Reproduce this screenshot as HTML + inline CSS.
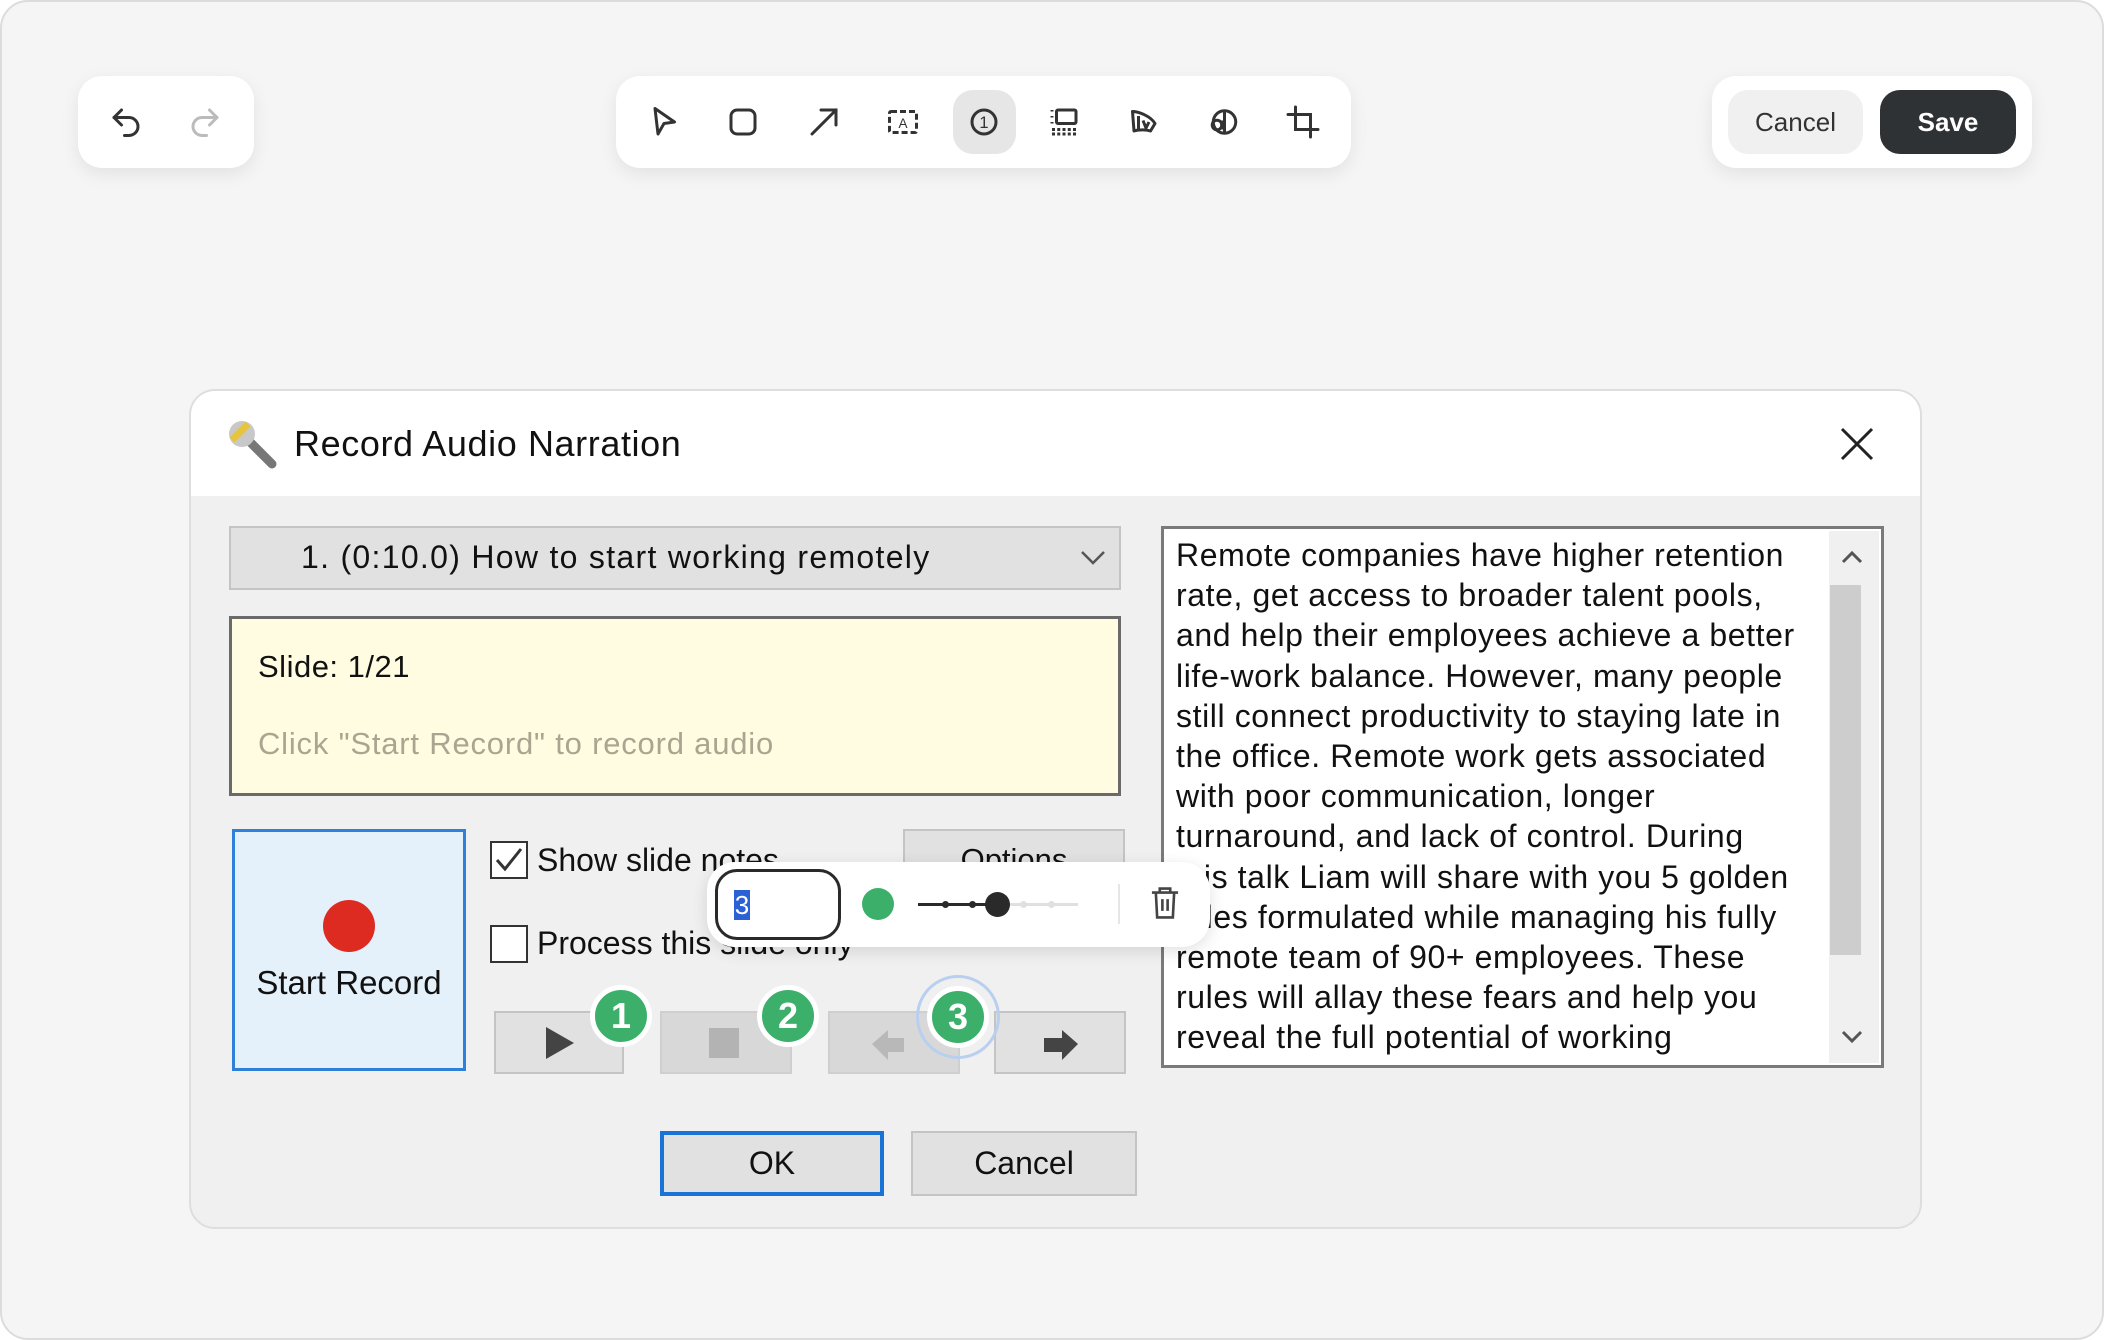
<!DOCTYPE html>
<html><head><meta charset="utf-8"><style>
*{box-sizing:border-box;margin:0;padding:0}
body{width:2104px;height:1340px;background:#fff;font-family:"Liberation Sans",sans-serif;position:relative;overflow:hidden}
.a{position:absolute}
.frame{left:0;top:0;width:2104px;height:1340px;background:#f5f5f5;border:2px solid #dcdcdc;border-radius:28px}
.panel{background:#fff;border-radius:24px;box-shadow:0 6px 18px rgba(0,0,0,.08)}
.ic{position:absolute;top:104px;width:36px;height:36px}
.dlgfont{font-family:"Liberation Sans",sans-serif;color:#111}
.btn{background:#e1e1e1;border:2px solid #c4c4c4}
.badge{width:62px;height:62px;border-radius:50%;background:#3cb06a;border:5px solid #fff;color:#fff;font-weight:bold;font-size:36px;text-align:center;line-height:52px}
.txt{font-size:32px;line-height:40.2px;color:#111;letter-spacing:0.6px;white-space:nowrap}
</style></head><body>
<div class="a frame"></div>

<div class="a panel" style="left:78px;top:76px;width:176px;height:92px"></div>
<svg class="a" style="left:108px;top:104px" width="36" height="36" viewBox="0 0 24 24" fill="none" stroke="#333" stroke-width="2" stroke-linecap="round" stroke-linejoin="round"><path d="M9 14L4 9l5-5"/><path d="M4 9h10a6 6 0 010 12h-3"/></svg>
<svg class="a" style="left:187px;top:104px" width="36" height="36" viewBox="0 0 24 24" fill="none" stroke="#bbb" stroke-width="2" stroke-linecap="round" stroke-linejoin="round"><path d="M15 14l5-5-5-5"/><path d="M20 9H10a6 6 0 000 12h3"/></svg>

<div class="a panel" style="left:616px;top:76px;width:735px;height:92px"></div>
<div class="a" style="left:953px;top:90px;width:63px;height:64px;border-radius:20px;background:#e6e6e6"></div>
<svg class="ic" style="left:646px" viewBox="0 0 24 24" fill="none" stroke="#333" stroke-width="2" stroke-linejoin="round"><path d="M6 3l13 9-7 1-4 7z"/></svg>
<svg class="ic" style="left:725px" viewBox="0 0 24 24" fill="none" stroke="#333" stroke-width="2"><rect x="4" y="4" width="16" height="16" rx="4"/></svg>
<svg class="ic" style="left:806px" viewBox="0 0 24 24" fill="none" stroke="#333" stroke-width="2" stroke-linecap="round"><path d="M4 20L20 4M10 4h10v10"/></svg>
<svg class="ic" style="left:885px" viewBox="0 0 24 24" fill="none" stroke="#333" stroke-width="2"><rect x="3" y="5" width="18" height="14" rx="1" stroke-dasharray="4 2"/><text x="12" y="16" font-size="9" text-anchor="middle" fill="#333" stroke="none" font-family="Liberation Sans">A</text></svg>
<svg class="ic" style="left:966px" viewBox="0 0 24 24" fill="none" stroke="#333" stroke-width="2"><circle cx="12" cy="12" r="8"/><text x="12" y="16" font-size="11" text-anchor="middle" fill="#333" stroke="none" font-family="Liberation Sans">1</text></svg>
<svg class="ic" style="left:1046px" viewBox="0 0 24 24" fill="none" stroke="#333" stroke-width="2"><rect x="7" y="4" width="13" height="9" rx="1"/><path d="M4 4v1M4 8v1M4 12v1M4 17h16M4 20h16" stroke-dasharray="2 1.5"/></svg>
<svg class="ic" style="left:1125px" viewBox="0 0 24 24" fill="none" stroke="#333" stroke-width="2" stroke-linejoin="round"><path d="M5 5c4 0 12 3 15 8l-3 5c-3-1-8-1-11 0z"/><path d="M9 8v9M12 11l2 5 2-4"/></svg>
<svg class="ic" style="left:1205px" viewBox="0 0 24 24" fill="none" stroke="#333" stroke-width="2"><circle cx="13" cy="12" r="7.5"/><path d="M13 4.5v15"/><circle cx="8" cy="14" r="3.2"/><path d="M11.2 11v6"/></svg>
<svg class="ic" style="left:1285px" viewBox="0 0 24 24" fill="none" stroke="#333" stroke-width="2" stroke-linecap="round"><path d="M7 2v15h15M2 7h15v15"/></svg>

<div class="a panel" style="left:1712px;top:76px;width:320px;height:92px"></div>
<div class="a" style="left:1728px;top:90px;width:135px;height:64px;border-radius:20px;background:#f0f0f0;font-size:26px;color:#333;text-align:center;line-height:64px">Cancel</div>
<div class="a" style="left:1880px;top:90px;width:136px;height:64px;border-radius:20px;background:#2f3235;font-size:26px;color:#fff;font-weight:bold;text-align:center;line-height:64px">Save</div>

<div class="a" style="left:189px;top:389px;width:1733px;height:840px;background:#f0f0f0;border:2px solid #dedede;border-radius:26px;overflow:hidden">
  <div style="height:105px;background:#fff"></div>
</div>
<svg class="a" style="left:226px;top:418px" width="54" height="52" viewBox="0 0 54 52"><path d="M22 22l24 24" stroke="#777" stroke-width="9" stroke-linecap="round"/><circle cx="16" cy="16" r="13" fill="#c8c8c8"/><path d="M6 22L22 6" stroke="#e8c43a" stroke-width="7"/></svg>
<div class="a dlgfont" style="left:294px;top:423px;font-size:36px;letter-spacing:0.6px">Record Audio Narration</div>
<svg class="a" style="left:1839px;top:426px" width="36" height="36" viewBox="0 0 36 36" stroke="#222" stroke-width="3"><path d="M3 3l30 30M33 3L3 33"/></svg>

<div class="a btn" style="left:229px;top:526px;width:892px;height:64px"></div>
<div class="a dlgfont" style="left:301px;top:539px;font-size:32px;letter-spacing:1.3px">1. (0:10.0) How to start working remotely</div>
<svg class="a" style="left:1080px;top:550px" width="26" height="16" viewBox="0 0 26 16" fill="none" stroke="#555" stroke-width="2.5"><path d="M2 2l11 11L24 2"/></svg>

<div class="a" style="left:229px;top:616px;width:892px;height:180px;background:#fffce1;border:3px solid #6a6a6a"></div>
<div class="a dlgfont" style="left:258px;top:649px;font-size:31px;letter-spacing:0.5px">Slide: 1/21</div>
<div class="a" style="left:258px;top:726px;font-size:31px;color:#aaa590;letter-spacing:0.8px">Click "Start Record" to record audio</div>

<div class="a" style="left:232px;top:829px;width:234px;height:242px;background:#e4f0fa;border:3px solid #2f80d8"></div>
<div class="a" style="left:323px;top:900px;width:52px;height:52px;border-radius:50%;background:#dd2b22"></div>
<div class="a dlgfont" style="left:232px;top:964px;width:234px;text-align:center;font-size:33px">Start Record</div>

<div class="a" style="left:490px;top:841px;width:38px;height:38px;border:2px solid #333;background:#fff"></div>
<svg class="a" style="left:494px;top:846px" width="30" height="28" viewBox="0 0 30 28" fill="none" stroke="#333" stroke-width="3"><path d="M3 14l8 9L27 3"/></svg>
<div class="a dlgfont" style="left:537px;top:842px;font-size:32px">Show slide notes</div>
<div class="a" style="left:490px;top:925px;width:38px;height:38px;border:2px solid #333;background:#fff"></div>
<div class="a dlgfont" style="left:537px;top:925px;font-size:32px">Process this slide only</div>
<div class="a btn" style="left:903px;top:829px;width:222px;height:62px;text-align:center;font-size:31px;line-height:58px;color:#111">Options</div>

<div class="a btn" style="left:494px;top:1011px;width:130px;height:63px"></div>
<svg class="a" style="left:546px;top:1027px" width="28" height="32"><path d="M0 0L28 16L0 32z" fill="#444"/></svg>
<div class="a btn" style="left:660px;top:1011px;width:132px;height:63px;background:#d8d8d8;border-color:#cfcfcf"></div>
<div class="a" style="left:709px;top:1028px;width:30px;height:30px;background:#b3b3b3"></div>
<div class="a btn" style="left:828px;top:1011px;width:132px;height:63px;background:#d8d8d8;border-color:#cfcfcf"></div>
<svg class="a" style="left:872px;top:1026px" width="40" height="36"><path d="M0 18L16 4v8h16v14H16v8z" fill="#b8b8b8"/></svg>
<div class="a btn" style="left:994px;top:1011px;width:132px;height:63px"></div>
<svg class="a" style="left:1042px;top:1026px" width="36" height="36"><path d="M36 18L20 4v8H2v14h18v8z" fill="#444"/></svg>

<div class="a" style="left:916px;top:975px;width:84px;height:84px;border-radius:50%;border:3px solid #b8cff0"></div>
<div class="a badge" style="left:590px;top:985px">1</div>
<div class="a badge" style="left:757px;top:985px">2</div>
<div class="a badge" style="left:927px;top:986px">3</div>

<div class="a btn" style="left:660px;top:1131px;width:224px;height:65px;border:4px solid #1a73d6;text-align:center;font-size:32px;line-height:57px;color:#111">OK</div>
<div class="a btn" style="left:911px;top:1131px;width:226px;height:65px;text-align:center;font-size:32px;line-height:61px;color:#111">Cancel</div>

<div class="a" style="left:1161px;top:526px;width:723px;height:542px;background:#fff;border:3px solid #7a7a7a"></div>
<div class="a" style="left:1829px;top:531px;width:50px;height:532px;background:#f0f0f0"></div>
<div class="a" style="left:1830px;top:585px;width:31px;height:370px;background:#cdcdcd"></div>
<svg class="a" style="left:1841px;top:550px" width="22" height="14" fill="none" stroke="#555" stroke-width="3"><path d="M2 12l9-9 9 9"/></svg>
<svg class="a" style="left:1841px;top:1030px" width="22" height="14" fill="none" stroke="#555" stroke-width="3"><path d="M2 2l9 9 9-9"/></svg>
<div class="a txt" style="left:1176px;top:535px;width:650px">Remote companies have higher retention<br>rate, get access to broader talent pools,<br>and help their employees achieve a better<br>life-work balance. However, many people<br>still connect productivity to staying late in<br>the office. Remote work gets associated<br>with poor communication, longer<br>turnaround, and lack of control. During<br>this talk Liam will share with you 5 golden<br>rules formulated while managing his fully<br>remote team of 90+ employees. These<br>rules will allay these fears and help you<br>reveal the full potential of working</div>

<div class="a" style="left:707px;top:862px;width:503px;height:85px;background:#fff;border-radius:28px;box-shadow:0 4px 16px rgba(0,0,0,.12)"></div>
<div class="a" style="left:715px;top:869px;width:126px;height:71px;border:3px solid #2a2a2a;border-radius:22px;background:#fff"></div>
<div class="a" style="left:734px;top:890px;width:16px;height:30px;background:#2a62d6;color:#fff;font-size:26px;line-height:30px;text-align:center">3</div>
<div class="a" style="left:862px;top:888px;width:32px;height:32px;border-radius:50%;background:#3cb06a"></div>
<div class="a" style="left:918px;top:903px;width:80px;height:3px;background:#2a2a2a"></div>
<div class="a" style="left:998px;top:903px;width:80px;height:3px;background:#e0e0e0"></div>
<div class="a" style="left:942px;top:901px;width:7px;height:7px;border-radius:50%;background:#2a2a2a"></div>
<div class="a" style="left:969px;top:901px;width:7px;height:7px;border-radius:50%;background:#2a2a2a"></div>
<div class="a" style="left:1020px;top:901px;width:7px;height:7px;border-radius:50%;background:#e0e0e0"></div>
<div class="a" style="left:1048px;top:901px;width:7px;height:7px;border-radius:50%;background:#e0e0e0"></div>
<div class="a" style="left:985px;top:892px;width:25px;height:25px;border-radius:50%;background:#2a2a2a"></div>
<div class="a" style="left:1118px;top:884px;width:2px;height:40px;background:#e6e6e6"></div>
<svg class="a" style="left:1149px;top:886px" width="32" height="34" viewBox="0 0 24 26" fill="none" stroke="#444" stroke-width="2"><path d="M2 5h20M8 5V2h8v3M5 5l1 19h12l1-19M10 10v9M14 10v9"/></svg>
</body></html>
